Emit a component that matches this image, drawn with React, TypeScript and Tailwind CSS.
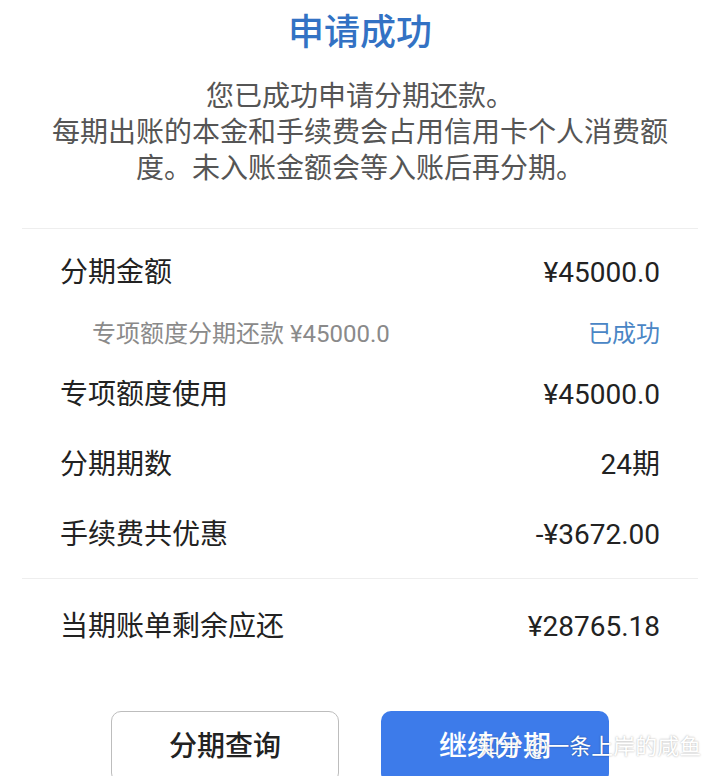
const font = "font-['Roboto','Noto_Sans_CJK_SC',sans-serif]";

type Row = { label: string; value: string };

const rows: Row[] = [
  { label: "专项额度使用", value: "¥45000.0" },
  { label: "分期期数", value: "24期" },
  { label: "手续费共优惠", value: "-¥3672.00" },
];

function MainRow({ label, value }: Row) {
  return (
    <div className="flex h-[70px] items-center justify-between px-[60px] text-[28px] text-[#222]">
      <span>{label}</span>
      <span>{value}</span>
    </div>
  );
}

export default function App() {
  return (
    <div className={`relative h-[776px] w-[720px] overflow-hidden bg-white ${font}`}>
      <h1 className="mt-[11px] text-center text-[36px] font-medium leading-[44px] text-[#3372c4]">
        申请成功
      </h1>

      <div className="mt-[24px] text-center text-[28px] leading-[36px] text-[#555]">
        <p>您已成功申请分期还款。</p>
        <p className="px-[40px]">
          每期出账的本金和手续费会占用信用卡个人消费额度。未入账金额会等入账后再分期。
        </p>
      </div>

      <div className="mx-[22px] mt-[41px] h-px bg-[#eeeeee]" />

      <div className="mt-[9px]">
        <MainRow label="分期金额" value="¥45000.0" />
        <div className="flex h-[52px] items-center justify-between pl-[92px] pr-[60px] text-[24px]">
          <span className="text-[#8a8a8a]">专项额度分期还款 ¥45000.0</span>
          <span className="text-[#4a86c5]">已成功</span>
        </div>
        {rows.map((r) => (
          <MainRow key={r.label} {...r} />
        ))}
      </div>

      <div className="mx-[22px] mt-[8px] h-px bg-[#eeeeee]" />

      <div className="mt-[13px]">
        <MainRow label="当期账单剩余应还" value="¥28765.18" />
      </div>

      <div className="mt-[49px] flex justify-center gap-[42px]">
        <button className="h-[72px] w-[228px] rounded-[10px] border-[1.5px] border-[#bdbdbd] bg-white text-[28px] font-medium text-[#222]">
          分期查询
        </button>
        <button className="h-[72px] w-[228px] rounded-[10px] bg-[#3d7bea] text-[28px] font-medium text-white">
          继续分期
        </button>
      </div>

      <div className="absolute left-[478px] top-[733px] text-[22px] leading-[28px] text-white [text-shadow:0_0_2px_rgba(0,0,0,0.35)]">
        知乎 @一条上岸的咸鱼
      </div>
    </div>
  );
}
